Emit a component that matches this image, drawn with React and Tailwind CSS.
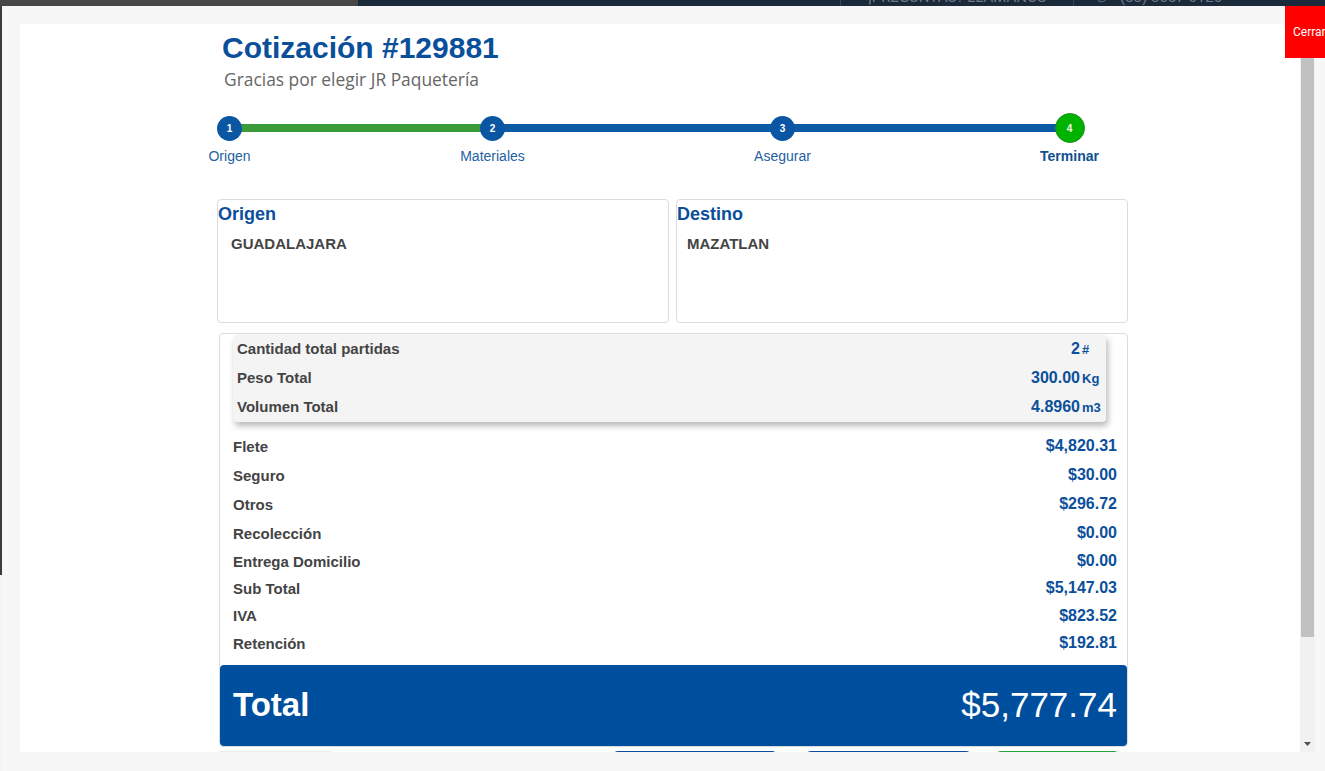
import React from 'react';

const steps = [
  { n: 1, label: 'Origen', ml: '' },
  { n: 2, label: 'Materiales', ml: 'ml-[183px]' },
  { n: 3, label: 'Asegurar', ml: 'ml-[210px]' },
  { n: 4, label: 'Terminar', ml: 'ml-[207px]', done: true },
];

const resumen = [
  { label: 'Cantidad total partidas', value: '2', unit: '#' },
  { label: 'Peso Total', value: '300.00', unit: 'Kg' },
  { label: 'Volumen Total', value: '4.8960', unit: 'm3' },
];

const cargos = [
  { label: 'Flete', value: '$4,820.31', h: 'h-[29px]' },
  { label: 'Seguro', value: '$30.00', h: 'h-[29px]' },
  { label: 'Otros', value: '$296.72', h: 'h-[29px]' },
  { label: 'Recolección', value: '$0.00', h: 'h-[29px]' },
  { label: 'Entrega Domicilio', value: '$0.00', h: 'h-[27px]' },
  { label: 'Sub Total', value: '$5,147.03', h: 'h-[27px]' },
  { label: 'IVA', value: '$823.52', h: 'h-[28px]' },
  { label: 'Retención', value: '$192.81', h: 'h-[27px]' },
];

const Stepper = () => (
  <div className="relative -ml-[27.5px] mt-[23px]">
    {/* track */}
    <div className="absolute left-[40px] top-[11px] flex h-[7.5px] w-[840px]">
      <div className="h-full w-[263px] bg-[#3a9b3a]" />
      <div className="h-full flex-1 bg-[#0b5aa6]" />
    </div>
    <div className="relative flex">
      {steps.map((s) => (
        <div key={s.n} className={`flex w-[80px] flex-col items-center ${s.ml}`}>
          <div className="flex h-[30px] items-center">
            {s.done ? (
              <div className="flex h-[30px] w-[30px] items-center justify-center rounded-full border border-[#1e8c1e] bg-[#00b300] text-[10px] font-bold text-[#f4f7e8]">
                {s.n}
              </div>
            ) : (
              <div className="flex h-[25px] w-[25px] items-center justify-center rounded-full bg-[#0a56a3] text-[10px] font-bold text-white">
                {s.n}
              </div>
            )}
          </div>
          <div
            className={`mt-[5px] whitespace-nowrap text-[14px] leading-[16px] ${
              s.done ? 'font-bold text-[#0e4f8e]' : 'text-[#2461a3]'
            }`}
          >
            {s.label}
          </div>
        </div>
      ))}
    </div>
  </div>
);

const LugarBox = ({ title, value, pad }) => (
  <div className="h-[124px] w-[452px] rounded-[4px] border border-[#dcdcdc]">
    <div className="pt-[4px] text-[18px] font-bold leading-[20px] text-[#0b4f9b]">{title}</div>
    <div className={`mt-[11px] text-[15px] font-bold leading-[18px] text-[#444] ${pad}`}>{value}</div>
  </div>
);

export default function App() {
  return (
    <div
      className="relative h-[771px] w-[1325px] overflow-hidden bg-[#f4f4f4]"
      style={{ fontFamily: '"Liberation Sans", Arial, sans-serif' }}
    >
      {/* page behind the modal */}
      <div className="absolute left-0 top-0 h-[575px] w-[2px] bg-[#3c3c3c]" />
      <div className="absolute left-0 top-0 flex h-[6px] w-full overflow-hidden">
        <div className="h-full w-[358px] bg-[#474747]" />
        <div className="relative h-full flex-1 bg-[#1b2a3b]">
          <div className="absolute left-[482px] top-0 h-full w-px bg-[#34465a]" />
          <div className="absolute left-[715px] top-0 h-full w-px bg-[#34465a]" />
          <div
            className="absolute left-[510px] top-[-10px] whitespace-nowrap text-[15px] leading-[15px] text-[#6f7987]"
            style={{ fontFamily: 'Roboto, sans-serif' }}
          >
            ¡PREGUNTAS? LLAMANOS
          </div>
          <div
            className="absolute left-[737px] top-[-10px] whitespace-nowrap text-[15px] leading-[15px] text-[#6f7987]"
            style={{ fontFamily: 'Roboto, sans-serif' }}
          >
            ✆
          </div>
          <div
            className="absolute left-[762px] top-[-10px] whitespace-nowrap text-[15px] leading-[15px] text-[#6f7987]"
            style={{ fontFamily: 'Roboto, sans-serif' }}
          >
            (33) 3657 0120
          </div>
        </div>
      </div>

      {/* modal */}
      <div className="absolute left-[2px] top-[6px] flex h-[765px] w-[1323px] bg-[#f7f7f7] pl-[18px] pt-[18px]">
        <div className="flex h-[728px]">
          {/* white scrolling body */}
          <div className="h-full w-[1280px] overflow-hidden bg-white">
            <div className="pl-[197px] pt-[6px]">
              <h1 className="ml-[5px] text-[30px] font-bold leading-[36px] text-[#0b4f9b]">Cotización #129881</h1>
              <p
                className="ml-[7px] mt-[2px] text-[17.4px] leading-[22px] text-[#666]"
                style={{ fontFamily: '"Open Sans", sans-serif' }}
              >
                Gracias por elegir JR Paquetería
              </p>

              <Stepper />

              <div className="mt-[35px] flex gap-[7px]">
                <LugarBox title="Origen" value="GUADALAJARA" pad="pl-[13px]" />
                <LugarBox title="Destino" value="MAZATLAN" pad="pl-[10px]" />
              </div>

              <div className="ml-[2px] mt-[10px] w-[909px] rounded-[4px] border border-[#dcdcdc]">
                <div className="ml-[13px] mr-[21px] mt-[1px] rounded-[4px] bg-[#f4f4f4] shadow-[2px_4px_6px_rgba(0,0,0,0.28)]">
                  {resumen.map((r) => (
                    <div key={r.label} className="flex h-[29px] items-center justify-between pl-[4px] pr-[4px]">
                      <span className="text-[15px] font-bold text-[#444]">{r.label}</span>
                      <span className="-mt-[2px] flex items-baseline text-[16px] font-bold text-[#0b4f9b]">
                        {r.value}
                        <span className="ml-[2px] inline-block w-[20px] text-[13px]">{r.unit}</span>
                      </span>
                    </div>
                  ))}
                </div>

                <div className="mt-[10.5px] pl-[13px] pr-[10px]">
                  {cargos.map((c) => (
                    <div key={c.label} className={`flex items-center justify-between ${c.h}`}>
                      <span className="text-[15px] font-bold text-[#444]">{c.label}</span>
                      <span className="-mt-[2px] text-[16px] font-bold text-[#0b4f9b]">{c.value}</span>
                    </div>
                  ))}
                </div>

                <div className="mt-[7px] flex h-[81px] items-center justify-between rounded-[4px] bg-[#004f9f] pl-[13px] pr-[10px] text-white">
                  <span className="text-[33px] font-bold">Total</span>
                  <span className="text-[35px]">$5,777.74</span>
                </div>
              </div>

              <div className="mt-[4px] flex">
                <div className="-ml-[2px] h-[36px] w-[120px] rounded-[6px] bg-[#ececec]" />
                <div className="ml-[277px] h-[36px] w-[166px] rounded-[6px] bg-[#0b4f9b]" />
                <div className="ml-[27px] h-[36px] w-[167px] rounded-[6px] bg-[#0b4f9b]" />
                <div className="ml-[23px] h-[36px] w-[125px] rounded-[6px] bg-[#21a33a]" />
              </div>
            </div>
          </div>

          {/* scrollbar */}
          <div className="flex h-full w-[15px] flex-col bg-[#f1f1f1]">
            <div className="h-[17px]" />
            <div className="mx-[1px] h-[596px] bg-[#c1c1c1]" />
            <div className="flex-1" />
            <div className="flex h-[17px] items-center justify-center">
              <svg width="7" height="4" viewBox="0 0 7 4">
                <path d="M0 0h7L3.5 4z" fill="#505050" />
              </svg>
            </div>
          </div>
        </div>
      </div>

      {/* close button */}
      <button
        className="absolute left-[1285px] top-[6px] h-[52px] w-[60px] bg-[#ff0000] pl-[8px] text-left text-[12px] text-white"
        style={{ fontFamily: 'Roboto, sans-serif' }}
      >
        Cerrar
      </button>
    </div>
  );
}
